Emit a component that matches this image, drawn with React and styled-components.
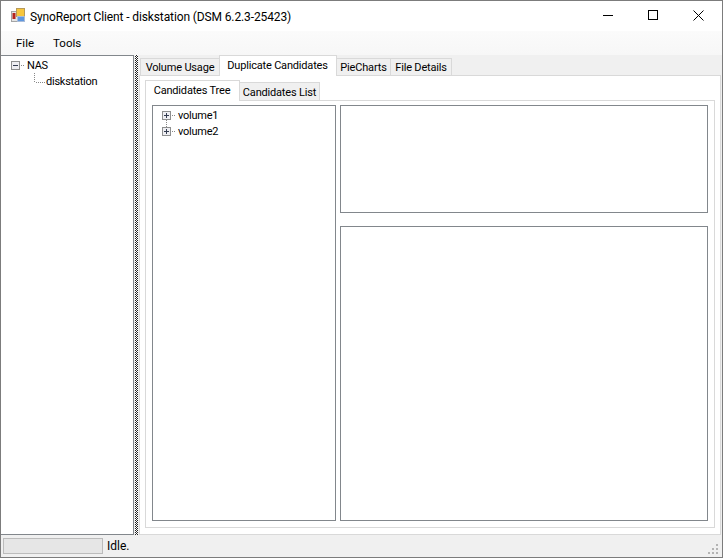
import React from "react";
import styled, { createGlobalStyle } from "styled-components";

const Global = createGlobalStyle`
  html, body { margin: 0; padding: 0; background: #fff; }
  body { font-family: Roboto, "Noto Sans", "Liberation Sans", sans-serif; font-size: 12px; color: #000; }
  * { box-sizing: border-box; }
`;

const Window = styled.div`
  width: 723px; height: 558px; display: flex; flex-direction: column;
  border: 1px solid #7c7c7c; background: #f0f0f0; overflow: hidden;
`;
const TitleBar = styled.div`
  height: 30px; flex: none; background: #fff; display: flex; align-items: center; padding-left: 9px;
`;
const TitleText = styled.span`
  margin-left: 4px; font-size: 12px; letter-spacing: -0.12px; white-space: nowrap; flex: 1;
  position: relative; top: 1px;
`;
const WinButtons = styled.div`display: flex; height: 100%; margin-right: 1px;`;
const WinButton = styled.div`
  width: 45px; display: flex; align-items: center; justify-content: center; margin-top: -1px;
`;
const MenuBar = styled.div`
  height: 24px; flex: none; display: flex; align-items: center; padding-left: 8px;
  background: linear-gradient(to bottom, #fbfbfb, #f7f7f7);
`;
const MenuItem = styled.span`
  padding: 0 7px; margin-right: 5px; font-size: 11.5px;
  &:last-child { margin-right: 0; }
`;
const Main = styled.div`flex: 1; display: flex; min-height: 0;`;
const TreePane = styled.div`
  width: 133px; flex: none; background: #fff; border-top: 1px solid #82878c; border-right: 1px solid #82878c;
  border-bottom: 1px solid #82878c; padding-top: 1px;
`;
const Splitter = styled.div`
  width: 5px; flex: none; background: #f0f0f0; padding-left: 1px; display: flex;
`;
const Dots = styled.div`
  width: 3px; height: 100%;
  background-image: conic-gradient(#222 25%, #fff 0 50%, #222 0 75%, #fff 0);
  background-size: 2px 2px;
`;
const RightPane = styled.div`
  flex: 1; padding-right: 1px; display: flex; flex-direction: column; min-width: 0;
`;
const TabRow = styled.div`
  display: flex; align-items: flex-end; height: 20px; flex: none; padding-left: ${p => p.$pad}px;
  position: relative; z-index: 1;
`;
const Tab = styled.div`
  width: ${p => p.$w}px; flex: none;
  height: ${p => (p.$active ? 21 : p.$inactiveH)}px;
  margin-bottom: -1px; margin-left: ${p => (p.$first ? 0 : -1)}px;
  padding-bottom: ${p => (p.$active ? 1 : 0)}px;
  padding-top: ${p => (p.$active ? 0 : 1)}px;
  padding-right: ${p => (p.$active ? 1 : 0)}px;
  position: relative; z-index: ${p => (p.$active ? 2 : 0)};
  display: flex; align-items: center; justify-content: center; white-space: nowrap;
  font-size: 11px; letter-spacing: -0.18px;
  background: ${p => (p.$active ? "#fff" : "#f0f0f0")};
  border: 1px solid #d9d9d9;
  border-bottom: ${p => (p.$active ? "none" : "1px solid #d9d9d9")};
`;
const TabBody = styled.div`
  flex: 1; min-height: 0; background: #fff; border: 1px solid #d9d9d9; display: flex; flex-direction: column;
  padding: 4px 5px 6px 5px;
`;
const InnerBody = styled.div`
  flex: 1; min-height: 0; background: #fff; border: 1px solid #d9d9d9; display: flex; gap: 4px;
  padding: 4px 6px 6px 6px;
`;
const Sunken = styled.div`
  background: #fff; border: 1px solid #82878c;
`;
const CandTree = styled(Sunken)`width: 184px; flex: none; padding-top: 1px;`;
const RightCol = styled.div`flex: 1; display: flex; flex-direction: column; gap: 13px; min-width: 0;`;
const TopBox = styled(Sunken)`height: 108px; flex: none;`;
const BottomBox = styled(Sunken)`flex: 1;`;
const TreeRow = styled.div`
  height: 16px; display: flex; align-items: center; padding-left: ${p => p.$indent}px;
  font-size: 11px; letter-spacing: -0.25px; white-space: nowrap;
`;
const Label = styled.span`margin-left: 1px;`;
const StatusBar = styled.div`
  height: 22px; flex: none; display: flex; align-items: center; padding-left: 2px;
  background: #f0f0f0; position: relative;
`;
const Progress = styled.div`
  width: 100px; height: 16px; background: #e6e6e6; border: 1px solid #bcbcbc;
`;
const StatusText = styled.span`margin-left: 4px; font-size: 12px;`;
const Grip = styled.svg`position: absolute; right: 3px; bottom: 2px;`;

const AppIcon = () => (
  <svg width="16" height="16" viewBox="0 0 16 16">
    <rect x="1.5" y="3.5" width="7" height="10" fill="#e4e4e4" stroke="#a5a5a5" />
    <rect x="2.5" y="5" width="3" height="6" fill="#b5231d" />
    <rect x="6.5" y="0.5" width="8" height="8" fill="#f7c63d" stroke="#b79a5a" />
    <rect x="7.5" y="8.5" width="7" height="5" fill="#5f97e0" stroke="#a9bcd8" />
  </svg>
);

const Expander = ({ open, line, dotDown }) => (
  <svg width="15" height="16" viewBox="0 0 15 16" style={{ flex: "none" }}>
    <rect x="0.5" y="4.5" width="8" height="8" fill="#eeeef2" stroke="#8e8f8f" />
    <path d="M2 8.5h5" stroke="#333c50" />
    {!open && <path d="M4.5 6v5" stroke="#333c50" />}
    <path d="M10 8.5h1M12 8.5h1" stroke="#888" />
    {dotDown && <path d="M4.5 13v1M4.5 15v1" stroke="#888" />}
    {line && <path d="M4.5 1v1M4.5 3v1" stroke="#888" />}
  </svg>
);

const Elbow = () => (
  <svg width="11" height="16" viewBox="0 0 11 16" style={{ flex: "none" }}>
    <path d="M0.5 0v1M0.5 2v1M0.5 4v1M0.5 6v1M0.5 8v1M2 9.5h1M4 9.5h1M6 9.5h1M8 9.5h1M10 9.5h1" stroke="#888" />
  </svg>
);

export default function App() {
  return (
    <>
      <Global />
      <Window>
        <TitleBar>
          <AppIcon />
          <TitleText>SynoReport Client - diskstation (DSM 6.2.3-25423)</TitleText>
          <WinButtons>
            <WinButton>
              <svg width="11" height="11" viewBox="0 0 11 11"><path d="M0 5.5h10" stroke="#000" /></svg>
            </WinButton>
            <WinButton>
              <svg width="11" height="11" viewBox="0 0 11 11"><rect x="0.5" y="0.5" width="9" height="9" fill="none" stroke="#000" /></svg>
            </WinButton>
            <WinButton>
              <svg width="11" height="11" viewBox="0 0 11 11"><path d="M0.5 0.5l10 10M10.5 0.5l-10 10" stroke="#000" fill="none" /></svg>
            </WinButton>
          </WinButtons>
        </TitleBar>
        <MenuBar>
          <MenuItem>File</MenuItem>
          <MenuItem>Tools</MenuItem>
        </MenuBar>
        <Main>
          <TreePane>
            <TreeRow $indent={10}>
              <Expander open />
              <Label>NAS</Label>
            </TreeRow>
            <TreeRow $indent={33}>
              <Elbow />
              <Label>diskstation</Label>
            </TreeRow>
          </TreePane>
          <Splitter><Dots /></Splitter>
          <RightPane>
            <TabRow $pad={1}>
              <Tab $first $w={80} $inactiveH={18}>Volume Usage</Tab>
              <Tab $active $w={118}>Duplicate Candidates</Tab>
              <Tab $w={55} $inactiveH={18}>PieCharts</Tab>
              <Tab $w={62} $inactiveH={18}>File Details</Tab>
            </TabRow>
            <TabBody>
              <TabRow $pad={0}>
                <Tab $first $active $w={95}>Candidates Tree</Tab>
                <Tab $w={81} $inactiveH={19}>Candidates List</Tab>
              </TabRow>
              <InnerBody>
                <CandTree>
                  <TreeRow $indent={9}>
                    <Expander dotDown />
                    <Label>volume1</Label>
                  </TreeRow>
                  <TreeRow $indent={9}>
                    <Expander line />
                    <Label>volume2</Label>
                  </TreeRow>
                </CandTree>
                <RightCol>
                  <TopBox />
                  <BottomBox />
                </RightCol>
              </InnerBody>
            </TabBody>
          </RightPane>
        </Main>
        <StatusBar>
          <Progress />
          <StatusText>Idle.</StatusText>
          <Grip width="12" height="12" viewBox="0 0 12 12" fill="#b4b4b4">
            <rect x="9" y="1" width="2" height="2" />
            <rect x="5" y="5" width="2" height="2" /><rect x="9" y="5" width="2" height="2" />
            <rect x="1" y="9" width="2" height="2" /><rect x="5" y="9" width="2" height="2" /><rect x="9" y="9" width="2" height="2" />
          </Grip>
        </StatusBar>
      </Window>
    </>
  );
}
